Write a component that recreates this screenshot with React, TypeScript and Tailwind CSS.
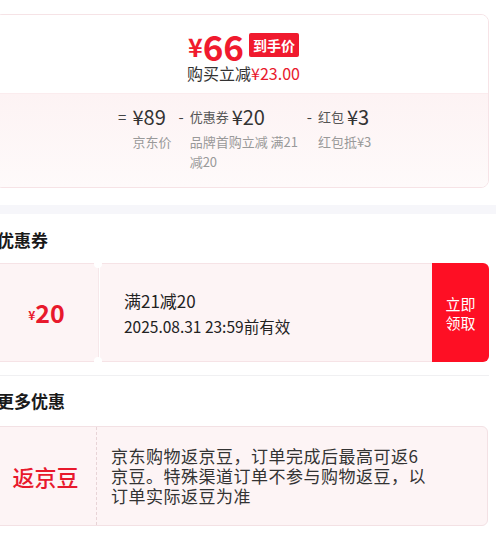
const FONT = '"Noto Sans CJK SC", "Noto Sans", sans-serif';

const breakdown = [
  { op: "=", label: "", value: "¥89", sub: "京东价", width: "w-[39px] whitespace-nowrap" },
  { op: "-", label: "优惠券", value: "¥20", sub: "品牌首购立减 满21减20", width: "w-[110px]" },
  { op: "-", label: "红包", value: "¥3", sub: "红包抵¥3", width: "w-[60px]" },
];

const App = () => {
  return (
    <div className="bg-white w-[496px] h-[534px] overflow-hidden" style={{ fontFamily: FONT }}>
      <div className="-ml-[6px] w-[495px] pt-[14px]">
        {/* Price Card */}
        <div className="rounded-lg border border-[#f6e3e6] overflow-hidden">
          <div className="bg-white h-[78px] flex flex-col items-center pt-[12px]">
            <div className="flex items-center h-[36px] text-[#f01a2e] ml-[4px]">
              <span className="text-[25px] font-bold leading-none mt-[3px]">¥</span>
              <span className="text-[35px] font-bold leading-none">66</span>
              <span className="ml-[5px] bg-[#f01a2e] text-white text-[14px] font-bold leading-none px-[4px] py-[5px] rounded-[2px]">
                到手价
              </span>
            </div>
            <div className="text-[16px] leading-[20px] text-[#333] ml-[4px]">
              购买立减<span className="text-[#e8192c]">¥23.00</span>
            </div>
          </div>
          <div className="h-[94px] bg-gradient-to-b from-[#fdf3f4] to-[#fefafa] border-t border-[#fbecee] flex justify-center pt-[10px] pl-[20px]">
            {breakdown.map((item, index) => (
              <div key={index} className="flex mr-[7px]">
                <span className="text-[15px] leading-[26px] text-[#444] mr-[6px]">{item.op}</span>
                <div className={item.width}>
                  <div className="flex items-center h-[26px] whitespace-nowrap">
                    {item.label && (
                      <span className="text-[13px] text-[#555] mr-[3px]">{item.label}</span>
                    )}
                    <span className="text-[20px] text-[#333]">{item.value}</span>
                  </div>
                  <div className="text-[13px] leading-[20px] text-[#999] mt-[2px]">{item.sub}</div>
                </div>
              </div>
            ))}
          </div>
        </div>

        <div className="h-[9px] bg-[#f6f6fa] mt-[17px] -mr-[20px]" />

        {/* Coupons */}
        <div className="pl-[3px] text-[17px] font-bold text-[#1a1a1a] leading-[22px] mt-[15px]">
          优惠券
        </div>
        <div className="mt-[12px] flex h-[99px]">
          <div className="relative w-[104px] bg-[#fdf4f5] border border-r-0 border-[#f6e3e6] rounded-l-md flex items-center justify-center text-[#e8192c]">
            <span className="text-[12px] font-bold mt-[4px]">¥</span>
            <span className="text-[25px] font-bold leading-none">20</span>
            <span className="absolute -right-[4px] -top-[4px] w-[8px] h-[8px] rounded-full bg-white" />
            <span className="absolute -right-[4px] -bottom-[4px] w-[8px] h-[8px] rounded-full bg-white" />
          </div>
          <div className="w-[2px] border-l border-[#f6e8ea]" />
          <div className="flex-1 bg-[#fdf4f5] border border-l-0 border-r-0 border-[#f6e3e6] flex flex-col justify-center pl-[24px]">
            <div className="text-[17px] leading-[22px] text-[#222]">满21减20</div>
            <div className="text-[15.5px] leading-[20px] text-[#222] mt-[4px]">2025.08.31 23:59前有效</div>
          </div>
          <div className="w-[57px] bg-[#fe0f24] rounded-r-md flex items-center justify-center text-white text-[15px] leading-[19px] text-center">
            立即
            <br />
            领取
          </div>
        </div>

        <div className="border-t border-[#f0f0f2] mt-[13px]" />

        {/* More offers */}
        <div className="pl-[3px] text-[17px] font-bold text-[#1a1a1a] leading-[22px] mt-[14px]">
          更多优惠
        </div>
        <div className="mt-[14px] mr-[1px] flex h-[100px] bg-[#fdf4f5] border border-[#f3e1e4] rounded-md">
          <div className="w-[102px] border-r border-dashed border-[#e8d4d7] flex items-center justify-center text-[22px] font-medium text-[#e8192c]">
            返京豆
          </div>
          <div className="flex-1 flex items-center pl-[14px]">
            <p className="w-[322px] text-[17px] tracking-[0.5px] leading-[20px] text-[#333]">
              京东购物返京豆，订单完成后最高可返6京豆。特殊渠道订单不参与购物返豆，以订单实际返豆为准
            </p>
          </div>
        </div>
      </div>
    </div>
  );
};

export default App;
